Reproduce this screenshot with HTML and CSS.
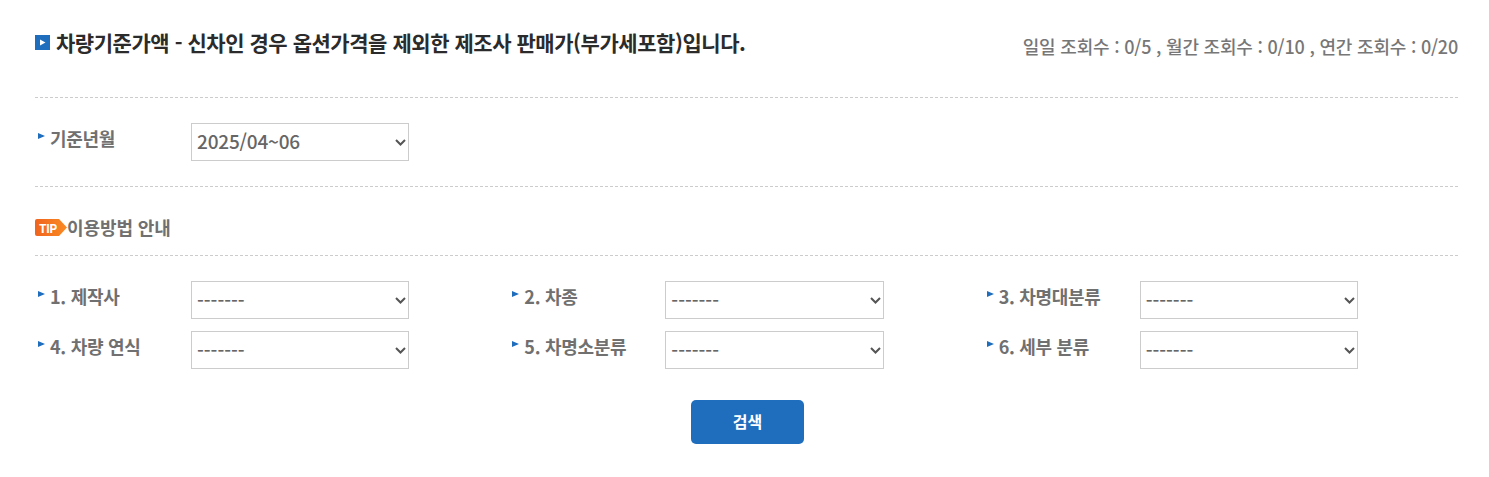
FILE: index.html
```html
<!DOCTYPE html>
<html lang="ko">
<head>
<meta charset="utf-8">
<title>차량기준가액</title>
<link rel="stylesheet" href="styles.css">
</head>
<body>
<div class="wrap">
	<div class="head">
		<h3 class="title">
			<svg class="title_ico" width="15" height="15" viewBox="0 0 15 15"><rect width="15" height="15" fill="#1f6dbd"/><path d="M5 4.5l5.5 3-5.5 3z" fill="#fff"/></svg>
			차량기준가액 - 신차인 경우 옵션가격을 제외한 제조사 판매가(부가세포함)입니다.
		</h3>
		<p class="count">일일 조회수 : 0/5 , 월간 조회수 : 0/10 , 연간 조회수 : 0/20</p>
	</div>

	<div class="row_base">
		<div class="field">
			<label class="lbl">기준년월</label>
			<select class="sel"><option>2025/04~06</option></select>
		</div>
	</div>

	<div class="tip">
		<span class="tip_mark">
			<svg width="32" height="17" viewBox="0 0 32 17"><defs><linearGradient id="tip_grad" x1="0" x2="1" y1="0" y2="0"><stop offset="0" stop-color="#f0641e"/><stop offset="1" stop-color="#f98a22"/></linearGradient></defs><path d="M2 0h22l8 8.5-8 8.5H2a2 2 0 0 1-2-2V2a2 2 0 0 1 2-2z" fill="url(#tip_grad)"/></svg>
			<span class="tip_badge">TIP</span>
		</span>
		<span class="tip_txt">이용방법 안내</span>
	</div>

	<div class="grid">
		<div class="field"><label class="lbl">1. 제작사</label><select class="sel sel_dash"><option>-------</option></select></div>
		<div class="field"><label class="lbl">2. 차종</label><select class="sel sel_dash"><option>-------</option></select></div>
		<div class="field"><label class="lbl">3. 차명대분류</label><select class="sel sel_dash"><option>-------</option></select></div>
		<div class="field"><label class="lbl">4. 차량 연식</label><select class="sel sel_dash"><option>-------</option></select></div>
		<div class="field"><label class="lbl">5. 차명소분류</label><select class="sel sel_dash"><option>-------</option></select></div>
		<div class="field"><label class="lbl">6. 세부 분류</label><select class="sel sel_dash"><option>-------</option></select></div>
	</div>

	<div class="btn_area"><button type="button" class="btn">검색</button></div>
</div>
</body>
</html>
```

FILE: styles.css
```css
* {box-sizing:border-box;}
html,body {margin:0;padding:0;background:#fff;}
body {font-family:"Noto Sans CJK KR","Noto Sans",sans-serif;color:#666;}
.wrap {width:1423px;margin-left:35px;}

.head {display:flex;justify-content:space-between;height:98px;padding-top:26px;border-bottom:1px dashed #ccc;}
.title {display:flex;align-items:center;gap:6px;height:32px;margin:0;font-size:21px;font-weight:700;letter-spacing:-0.45px;color:#2b2b2b;}
.title_ico {flex:none;}
.count {margin:7px 0 0;font-size:18px;line-height:26px;font-weight:500;letter-spacing:-0.2px;color:#777;}

.row_base {height:89px;padding-top:25px;border-bottom:1px dashed #ccc;}

.field {display:flex;align-items:flex-start;height:38px;}
.lbl {position:relative;width:156px;flex:none;padding:1px 0 0 15px;font-size:18px;line-height:28px;font-weight:700;letter-spacing:-0.3px;color:#707070;}
.lbl:before {content:"";position:absolute;left:3px;top:10px;border-left:7px solid #1f6dbd;border-top:3px solid transparent;border-bottom:3px solid transparent;}
.sel {appearance:none;width:218.4px;height:38px;padding:0 0 4px 5px;border:1px solid #ccc;border-radius:0;font-family:inherit;font-size:19px;font-weight:500;letter-spacing:-0.2px;color:#666;
	background:#fff url("data:image/svg+xml,%3Csvg xmlns='http://www.w3.org/2000/svg' width='11' height='7' viewBox='0 0 11 7'%3E%3Cpath d='M1 1l4.5 4.5L10 1' fill='none' stroke='%23555' stroke-width='2'/%3E%3C/svg%3E") no-repeat right 2px top 15px;}
.sel_dash {padding-bottom:2px;letter-spacing:0;}

.tip {display:flex;align-items:center;height:69px;padding-top:12px;border-bottom:1px dashed #ccc;}
.tip_mark {position:relative;display:flex;flex:none;}
.tip_badge {position:absolute;left:4px;top:0;font-size:12px;line-height:17px;font-weight:700;letter-spacing:-0.6px;color:#fff;}
.tip_txt {font-size:18px;font-weight:700;letter-spacing:-0.1px;color:#707070;}

.grid {display:grid;grid-template-columns:repeat(3,474.33px);row-gap:12px;padding-top:25px;}

.btn_area {display:flex;justify-content:center;padding-top:31px;}
.btn {width:113px;height:44px;margin-left:2px;padding:0 0 2px;border:0;border-radius:5px;background:#1f6dbd;color:#fff;font-family:inherit;font-size:16px;font-weight:700;}
```
